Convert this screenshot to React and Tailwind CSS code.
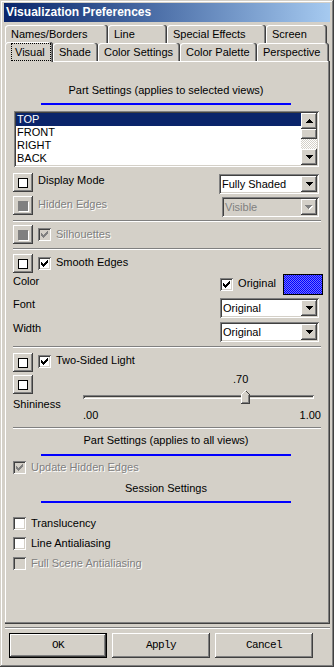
import React from "react";

const FONT = "font-['Liberation_Sans',Arial,sans-serif]";
const raised =
  "shadow-[inset_-1px_-1px_0_#404040,inset_1px_1px_0_#fff,inset_-2px_-2px_0_#808080]";
const sunken =
  "shadow-[inset_1px_1px_0_#808080,inset_-1px_-1px_0_#fff,inset_2px_2px_0_#404040,inset_-2px_-2px_0_#d4d0c8]";
const disText = "text-[#808080] [text-shadow:1px_1px_0_#fff]";

function Tri({ dir = "down", color = "#000" }) {
  const d =
    dir === "down"
      ? "M0 0h7v1H0z M1 1h5v1H1z M2 2h3v1H2z M3 3h1v1H3z"
      : "M3 0h1v1H3z M2 1h3v1H2z M1 2h5v1H1z M0 3h7v1H0z";
  return (
    <svg width="7" height="4" viewBox="0 0 7 4" shapeRendering="crispEdges">
      <path d={d} fill={color} />
    </svg>
  );
}

function DisTri() {
  return (
    <svg width="8" height="5" viewBox="0 0 8 5" shapeRendering="crispEdges">
      <path d="M1 1h7v1H1z M2 2h5v1H2z M3 3h3v1H3z M4 4h1v1H4z" fill="#fff" />
      <path d="M0 0h7v1H0z M1 1h5v1H1z M2 2h3v1H2z M3 3h1v1H3z" fill="#808080" />
    </svg>
  );
}

function CheckMark({ color = "#000" }) {
  return (
    <svg width="7" height="7" viewBox="0 0 7 7" shapeRendering="crispEdges">
      <path
        d="M6 0h1v1h-1z M5 1h2v1h-2z M0 2h1v1h-1z M4 2h3v1h-3z M0 3h2v1h-2z M3 3h3v1h-3z M0 4h5v1h-5z M1 5h3v1h-3z M2 6h1v1h-1z"
        fill={color}
      />
    </svg>
  );
}

function Check({ checked, disabled }) {
  return (
    <div
      className={`w-[13px] h-[13px] shrink-0 flex items-center justify-center ${
        disabled ? "bg-[#d4d0c8]" : "bg-white"
      } ${sunken}`}
    >
      {checked && <CheckMark color={disabled ? "#808080" : "#000"} />}
    </div>
  );
}

function SqBtn({ disabled }) {
  return (
    <div
      className={`w-[20px] h-[19px] shrink-0 bg-[#d4d0c8] flex items-center justify-center ${raised}`}
    >
      {disabled ? (
        <div className="w-[10px] h-[10px] bg-[#808080] shadow-[1px_1px_0_#fff]" />
      ) : (
        <div className="w-[10px] h-[10px] bg-white border border-black" />
      )}
    </div>
  );
}

function Select({ value, disabled, w }) {
  return (
    <div
      className={`${w} h-[20px] shrink-0 flex items-center p-[2px] ${
        disabled ? "bg-[#d4d0c8]" : "bg-white"
      } ${sunken}`}
    >
      <span
        className={`flex-1 pl-[1px] leading-[16px] text-[11px] ${
          disabled ? "text-[#808080]" : "text-black"
        }`}
      >
        {value}
      </span>
      <div
        className={`w-[16px] h-[16px] bg-[#d4d0c8] flex items-center justify-center ${raised}`}
      >
        {disabled ? <DisTri /> : <Tri />}
      </div>
    </div>
  );
}

function Sep() {
  return <div className="h-[2px] -mr-[2px] bg-white shadow-[inset_0_1px_0_#808080]" />;
}

function BlueLine({ className = "" }) {
  return <div className={`h-[2px] w-[250px] mx-auto bg-[#0000ff] ${className}`} />;
}

function Tab({ w, label, selected }) {
  const base =
    "shadow-[inset_-1px_0_0_#404040,inset_-2px_0_0_#808080,inset_1px_1px_0_#fff] rounded-t-[3px] bg-[#d4d0c8] pl-[6px] text-[11px] whitespace-nowrap shrink-0";
  if (selected) {
    return (
      <div className={`${w} h-[20px] -mb-[1px] relative z-10 ${base} pl-[2px] pt-[1px] pr-[2px]`}>
        <div className="h-[18px] leading-[17px] border border-dotted border-black pl-[3px]">
          {label}
        </div>
      </div>
    );
  }
  return <div className={`${w} h-[18px] leading-[18px] ${base}`}>{label}</div>;
}

function ListItem({ children, selected }) {
  return (
    <div
      className={`h-[13px] leading-[13px] pl-[1px] ${
        selected ? "bg-[#0a246a] text-white" : "text-black"
      }`}
    >
      {children}
    </div>
  );
}

function CheckRow({ label, checked, disabled, className = "" }) {
  return (
    <div className={`flex items-center h-[13px] ${className}`}>
      <Check checked={checked} disabled={disabled} />
      <span className={`ml-[5px] leading-[13px] ${disabled ? disText : ""}`}>{label}</span>
    </div>
  );
}

function Thumb() {
  return (
    <svg width="9" height="14" viewBox="0 0 9 14" shapeRendering="crispEdges">
      <path d="M0 4 L4 0 L8 4 V13 H0 Z" fill="#d4d0c8" />
      <path d="M0 4h1v9H0z M1 3h1v1H1z M2 2h1v1H2z M3 1h1v1H3z M4 0h1v1H4z" fill="#fff" />
      <path d="M5 1h1v1H5z M6 2h1v1H6z M7 3h1v1H7z M8 4h1v10H8z M0 13h8v1H0z" fill="#404040" />
      <path d="M7 5h1v8H7z M1 12h6v1H1z" fill="#808080" />
    </svg>
  );
}

function DlgButton({ children, isDefault }) {
  return (
    <div
      className={`w-[98px] h-[25px] bg-[#d4d0c8] flex items-center justify-center font-['Liberation_Mono',monospace] text-[11px] tracking-[-0.6px] ${
        isDefault
          ? "shadow-[inset_0_0_0_1px_#000,inset_-2px_-2px_0_#404040,inset_2px_2px_0_#fff,inset_-3px_-3px_0_#808080]"
          : raised
      }`}
    >
      {children}
    </div>
  );
}

export default function App() {
  return (
    <div
      className={`w-[334px] h-[667px] bg-[#d4d0c8] ${FONT} text-[11px] text-black flex flex-col pt-[3px] px-[4px] pb-[4px] overflow-hidden shadow-[inset_-1px_-1px_0_#404040,inset_1px_1px_0_#d4d0c8,inset_-2px_-2px_0_#808080,inset_2px_2px_0_#fff]`}
    >
      {/* Title bar */}
      <div className="h-[19px] shrink-0 bg-linear-to-r from-[#0a246a] to-[#a6caf0] flex items-center pl-[2px] text-white font-bold text-[12px] leading-[19px]">
        Visualization Preferences
      </div>

      {/* Tabs */}
      <div className="mt-[3px] ml-[1px] flex flex-col shrink-0">
        <div className="flex h-[18px]">
          <Tab w="w-[103px]" label="Names/Borders" />
          <Tab w="w-[59px]" label="Line" />
          <Tab w="w-[99px]" label="Special Effects" />
          <Tab w="w-[61px]" label="Screen" />
        </div>
        <div className="flex h-[18px] items-end">
          <Tab w="w-[48px]" label="Visual" selected />
          <Tab w="w-[45px]" label="Shade" />
          <Tab w="w-[82px]" label="Color Settings" />
          <Tab w="w-[77px]" label="Color Palette" />
          <Tab w="w-[72px]" label="Perspective" />
        </div>
      </div>

      {/* Panel */}
      <div className="ml-[1px] h-[563px] shrink-0 flex flex-col pl-[8px] pr-[11px] pt-[1px] shadow-[inset_-1px_-1px_0_#404040,inset_-2px_-2px_0_#808080,inset_1px_1px_0_#fff]">
        <div className="mt-[21px] h-[14px] leading-[14px] text-center">
          Part Settings (applies to selected views)
        </div>
        <BlueLine className="mt-[6px]" />

        {/* List */}
        <div className={`mt-[6px] ml-[1px] h-[56px] bg-white p-[2px] flex ${sunken}`}>
          <div className="flex-1 flex flex-col">
            <ListItem selected>TOP</ListItem>
            <ListItem>FRONT</ListItem>
            <ListItem>RIGHT</ListItem>
            <ListItem>BACK</ListItem>
          </div>
          <div className="w-[16px] flex flex-col">
            <div className={`h-[16px] bg-[#d4d0c8] flex items-center justify-center ${raised}`}>
              <Tri dir="up" />
            </div>
            <div className={`h-[10px] bg-[#d4d0c8] ${raised}`} />
            <div className="h-[10px] bg-[repeating-conic-gradient(#ffffff_0%_25%,#d4d0c8_0%_50%)] bg-[length:2px_2px]" />
            <div className={`h-[16px] bg-[#d4d0c8] flex items-center justify-center ${raised}`}>
              <Tri dir="down" />
            </div>
          </div>
        </div>

        {/* Display mode */}
        <div className="mt-[6px] h-[20px] flex items-start">
          <SqBtn />
          <span className="ml-[5px] pt-[1px] leading-[13px]">Display Mode</span>
          <div className="ml-auto mt-[1px]">
            <Select w="w-[100px]" value="Fully Shaded" />
          </div>
        </div>
        <div className="mt-[3px] h-[20px] flex items-start">
          <SqBtn disabled />
          <span className={`ml-[5px] pt-[2px] leading-[13px] ${disText}`}>Hidden Edges</span>
          <div className="ml-auto mt-[1px]">
            <Select w="w-[97px]" value="Visible" disabled />
          </div>
        </div>

        <div className="mt-[4px]">
          <Sep />
        </div>

        <div className="mt-[3px] h-[19px] flex items-center">
          <SqBtn disabled />
          <div className="ml-[5px]">
            <Check checked disabled />
          </div>
          <span className={`ml-[5px] leading-[13px] ${disText}`}>Silhouettes</span>
        </div>

        <div className="mt-[4px]">
          <Sep />
        </div>

        <div className="mt-[4px] h-[19px] flex items-start">
          <SqBtn />
          <div className="ml-[5px] mt-[3px]">
            <Check checked />
          </div>
          <span className="ml-[5px] mt-[2px] leading-[13px]">Smooth Edges</span>
        </div>

        {/* Color */}
        <div className="mt-[1px] h-[21px] flex items-start">
          <span className="pt-[1px] leading-[13px]">Color</span>
          <div className="ml-auto -mr-[4px] flex items-center h-[21px]">
            <Check checked />
            <span className="ml-[5px] leading-[13px] -mt-[3px]">Original</span>
            <div className="ml-[7px] w-[40px] h-[21px] border border-black bg-[repeating-conic-gradient(#0000ff_0%_25%,#7070ff_0%_50%)] bg-[length:2px_2px]" />
          </div>
        </div>

        <div className="mt-[3px] h-[20px] flex items-start">
          <span className="leading-[13px]">Font</span>
          <div className="ml-auto">
            <Select w="w-[99px]" value="Original" />
          </div>
        </div>
        <div className="mt-[4px] h-[20px] flex items-start">
          <span className="leading-[13px]">Width</span>
          <div className="ml-auto">
            <Select w="w-[99px]" value="Original" />
          </div>
        </div>

        <div className="mt-[4px]">
          <Sep />
        </div>

        <div className="mt-[5px] h-[19px] flex items-start">
          <SqBtn />
          <div className="ml-[5px] mt-[2px]">
            <Check checked />
          </div>
          <span className="ml-[5px] mt-[1px] leading-[13px]">Two-Sided Light</span>
        </div>

        {/* Shininess slider */}
        <div className="mt-[1px] flex">
          <div className="w-[70px] flex flex-col">
            <div className="mt-[2px]">
              <SqBtn />
            </div>
            <span className="mt-[4px] leading-[13px]">Shininess</span>
          </div>
          <div className="flex-1 -mr-[2px] flex flex-col">
            <div className="h-[13px] leading-[13px] pl-[150px]">.70</div>
            <div className="relative mt-[4px] h-[14px] flex items-center">
              <div className="w-[231px] h-[4px] bg-[#d4d0c8] shadow-[inset_1px_1px_0_#808080,inset_-1px_-1px_0_#fff,inset_2px_2px_0_#404040]" />
              <div className="absolute left-[158px] top-0 flex">
                <Thumb />
              </div>
            </div>
            <div className="mt-[5px] h-[13px] leading-[13px] flex justify-between">
              <span>.00</span>
              <span>1.00</span>
            </div>
          </div>
        </div>

        <div className="mt-[5px]">
          <Sep />
        </div>

        <div className="mt-[4px] h-[14px] leading-[14px] text-center">
          Part Settings (applies to all views)
        </div>
        <BlueLine className="mt-[7px]" />

        <CheckRow className="mt-[5px]" label="Update Hidden Edges" checked disabled />

        <div className="mt-[7px] h-[14px] leading-[14px] text-center">Session Settings</div>
        <BlueLine className="mt-[6px]" />

        <CheckRow className="mt-[14px]" label="Translucency" />
        <CheckRow className="mt-[7px]" label="Line Antialiasing" />
        <CheckRow className="mt-[7px]" label="Full Scene Antialiasing" disabled />
      </div>

      {/* bottom separator */}
      <div className="mt-[3px] ml-[1px] h-[2px] shrink-0 bg-white shadow-[inset_0_1px_0_#808080]" />

      {/* Buttons */}
      <div className="mt-[4px] ml-[5px] flex gap-[5px] shrink-0">
        <DlgButton isDefault>OK</DlgButton>
        <DlgButton>Apply</DlgButton>
        <DlgButton>Cancel</DlgButton>
      </div>
    </div>
  );
}
